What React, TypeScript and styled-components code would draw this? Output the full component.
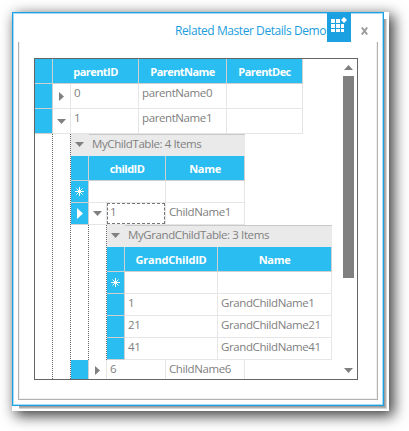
import React from 'react';
import styled, { createGlobalStyle } from 'styled-components';

const BLUE = '#29bdf1';
const INK = '#808080';

const Global = createGlobalStyle`
  * { box-sizing: border-box; }
  html, body { margin: 0; background: #fff; overflow: hidden; }
  body {
    font-family: "Open Sans", "Noto Sans", sans-serif;
    font-size: 11.5px;
    letter-spacing: -0.4px;
    color: ${INK};
  }
`;

const Desktop = styled.div`
  width: 409px;
  height: 431px;
  padding: 12px 0 0 12px;
  overflow: hidden;
`;

const Backing = styled.div`
  width: 377px;
  height: 399px;
  background:
    linear-gradient(#9b9b9b, #9b9b9b) 7px 394px / 366px 1px no-repeat,
    linear-gradient(#9b9b9b, #9b9b9b) 372px 7px / 1px 388px no-repeat,
    linear-gradient(#b3b3b3, #b3b3b3) 7px 395px / 367px 1px no-repeat,
    linear-gradient(#b3b3b3, #b3b3b3) 373px 7px / 1px 389px no-repeat,
    linear-gradient(#d6d6d6, #d6d6d6) 7px 396px / 368px 1px no-repeat,
    linear-gradient(#d6d6d6, #d6d6d6) 374px 7px / 1px 390px no-repeat,
    #fff;
  box-shadow: 4px 4px 13px 1px rgba(0, 0, 0, 0.75);
`;

const Window = styled.div`
  width: 372px;
  height: 394px;
  display: flex;
  flex-direction: column;
  background: #fff;
  border: 1px solid #1ba1e2;
  box-shadow: inset 0 0 0 1px #a5dbf4;
`;

const TitleBar = styled.header`
  display: flex;
  justify-content: flex-end;
  height: 29px;
`;

const Title = styled.h1`
  margin: 0;
  padding: 9px 1px 0 0;
  font-size: 12px;
  font-weight: 400;
  line-height: 17px;
  letter-spacing: -0.43px;
  color: #1b9ddd;
  white-space: nowrap;
`;

const AppBadge = styled.div`
  width: 24px;
  height: 29px;
  background: #1ba1e2;
  svg { display: block; }
`;

const CloseButton = styled.button`
  display: flex;
  align-items: flex-start;
  width: 32px;
  height: 29px;
  padding: 14px 0 0 10px;
  border: 0;
  background: none;
  svg { display: block; }
`;

const Frame = styled.main`
  width: 360px;
  height: 358px;
  margin-left: 5px;
  padding: 16px 0 0 15px;
  border: 1px solid #b1b1b1;
  border-top: 0;
  box-shadow: inset 1px -1px 0 #f0f0f0, inset -1px 0 0 #f0f0f0;
`;

const Grid = styled.section`
  width: 324px;
  height: 322px;
  display: flex;
  justify-content: space-between;
  border: 1px solid #656565;
  overflow: hidden;
`;

const Content = styled.div`
  width: 297px;
  flex: none;
`;

const Row = styled.div<{ $h: number }>`
  display: flex;
  height: ${p => p.$h}px;
`;

const HeadCell = styled.div<{ $w: number; $ls?: number }>`
  width: ${p => p.$w}px;
  flex: none;
  background: ${BLUE};
  border-right: 1px solid #d0d0d0;
  border-bottom: 1px solid #d0d0d0;
  color: #fff;
  font-size: 11px;
  font-weight: 700;
  line-height: 25px;
  text-align: center;
  letter-spacing: ${p => p.$ls ?? -0.55}px;
  white-space: nowrap;
`;

const Cell = styled.div<{ $w: number; $focus?: boolean }>`
  position: relative;
  width: ${p => p.$w}px;
  flex: none;
  padding-left: 3px;
  border-right: 1px solid #e6e6e6;
  border-bottom: 1px solid #e6e6e6;
  line-height: 18px;
  white-space: nowrap;
  ${p => p.$focus && `
    &::after {
      content: "";
      position: absolute;
      inset: 0;
      border: 1px dashed #777;
    }
  `}
`;

const Indicator = styled.div`
  width: 18px;
  flex: none;
  display: flex;
  align-items: center;
  justify-content: center;
  background: ${BLUE};
  border-right: 1px solid #d0d0d0;
  border-bottom: 1px solid #d0d0d0;
`;

const Expander = styled.div`
  width: 18px;
  flex: none;
  display: flex;
  align-items: center;
  justify-content: center;
  border-right: 1px solid #e6e6e6;
  border-bottom: 1px solid #e6e6e6;
`;

const Nested = styled.div`
  display: flex;
`;

const Guide = styled.div`
  width: 18px;
  flex: none;
  background: repeating-linear-gradient(#666 0 1px, #fff 1px 2px) right top / 1px 100% no-repeat;
`;

const Group = styled.div<{ $w: number }>`
  width: ${p => p.$w}px;
  height: 22px;
  display: flex;
  background: linear-gradient(#c8c8c8, #c8c8c8) 18px 0 / 100% 1px no-repeat, #eaeaea;
  line-height: 19px;
  white-space: nowrap;
  svg { flex: none; margin: 8px 8px 0 4px; }
`;

const ScrollBar = styled.div`
  width: 11px;
  margin-right: 3px;
  display: flex;
  flex-direction: column;
  align-items: center;
  justify-content: space-between;
  padding: 6px 0;
`;

const Thumb = styled.div`
  width: 11px;
  height: 202px;
  margin: 6px 0 auto;
  background: #808080;
`;

const Down = () => (
  <svg width="9" height="5" fill={INK}><path d="M0 0h9L4.5 5z" /></svg>
);
const Up = () => (
  <svg width="9" height="5" fill={INK}><path d="M0 5h9L4.5 0z" /></svg>
);
const Right = () => (
  <svg width="5" height="9" fill={INK}><path d="M0 0v9l5-4.5z" /></svg>
);
const Current = () => (
  <svg width="6" height="11" fill="#fff"><path d="M0 0v11l6-5.5z" /></svg>
);
const Star = () => (
  <svg width="9" height="9" fill="none" stroke="#fff">
    <path d="M4.5 0v9M0 4.5h9M1.5 1.5l6 6M7.5 1.5l-6 6" />
  </svg>
);

const grandRows = [
  ['1', 'GrandChildName1'],
  ['21', 'GrandChildName21'],
  ['41', 'GrandChildName41'],
];

const GrandChildTable = () => (
  <div>
    <Group $w={225}><Down />MyGrandChildTable: 3 Items</Group>
    <Row $h={25}>
      <Indicator />
      <HeadCell $w={93} $ls={-0.2}>GrandChildID</HeadCell>
      <HeadCell $w={114} $ls={-0.3}>Name</HeadCell>
    </Row>
    <Row $h={22}><Indicator><Star /></Indicator><Cell $w={93} /><Cell $w={114} /></Row>
    {grandRows.map(([id, name]) => (
      <Row $h={22} key={id}>
        <Indicator />
        <Cell $w={93}>{id}</Cell>
        <Cell $w={114}>{name}</Cell>
      </Row>
    ))}
  </div>
);

const ChildTable = () => (
  <div>
    <Group $w={174}><Down />MyChildTable: 4 Items</Group>
    <Row $h={25}>
      <Indicator />
      <HeadCell $w={77}>childID</HeadCell>
      <HeadCell $w={79} $ls={-0.3}>Name</HeadCell>
    </Row>
    <Row $h={22}><Indicator><Star /></Indicator><Cell $w={77} /><Cell $w={79} /></Row>
    <Row $h={22}>
      <Indicator><Current /></Indicator>
      <Expander><Down /></Expander>
      <Cell $w={59} $focus>1</Cell>
      <Cell $w={79}>ChildName1</Cell>
    </Row>
    <Nested><Guide /><Guide /><GrandChildTable /></Nested>
    <Row $h={22}>
      <Indicator />
      <Expander><Right /></Expander>
      <Cell $w={59}>6</Cell>
      <Cell $w={79}>ChildName6</Cell>
    </Row>
  </div>
);

export default function App() {
  return (
    <Desktop>
      <Global />
      <Backing>
        <Window>
          <TitleBar>
            <Title>Related Master Details Demo</Title>
            <AppBadge>
              <svg width="24" height="29" fill="#fff">
                <path d="M4 6h4v4H4zM9 6h4v4H9zM4 11h4v4H4zM9 11h4v4H9zM14 11h3v4h-3zM4 16h4v3H4zM9 16h4v3H9zM14 16h3v3h-3zM17 4l3 3-3 3-3-3z" />
              </svg>
            </AppBadge>
            <CloseButton aria-label="Close">
              <svg width="7" height="8" fill="none" stroke="#9c9c9c" strokeWidth="2">
                <path d="M.8.5l5.4 7M6.2.5l-5.4 7" />
              </svg>
            </CloseButton>
          </TitleBar>
          <Frame>
            <Grid>
              <Content>
                <Row $h={25}>
                  <Indicator />
                  <HeadCell $w={86}>parentID</HeadCell>
                  <HeadCell $w={88}>ParentName</HeadCell>
                  <HeadCell $w={76}>ParentDec</HeadCell>
                </Row>
                <Row $h={25}>
                  <Indicator />
                  <Expander><Right /></Expander>
                  <Cell $w={68}>0</Cell>
                  <Cell $w={88}>parentName0</Cell>
                  <Cell $w={76} />
                </Row>
                <Row $h={25}>
                  <Indicator />
                  <Expander><Down /></Expander>
                  <Cell $w={68}>1</Cell>
                  <Cell $w={88}>parentName1</Cell>
                  <Cell $w={76} />
                </Row>
                <Nested><Guide /><Guide /><ChildTable /></Nested>
              </Content>
              <ScrollBar><Up /><Thumb /><Down /></ScrollBar>
            </Grid>
          </Frame>
        </Window>
      </Backing>
    </Desktop>
  );
}
